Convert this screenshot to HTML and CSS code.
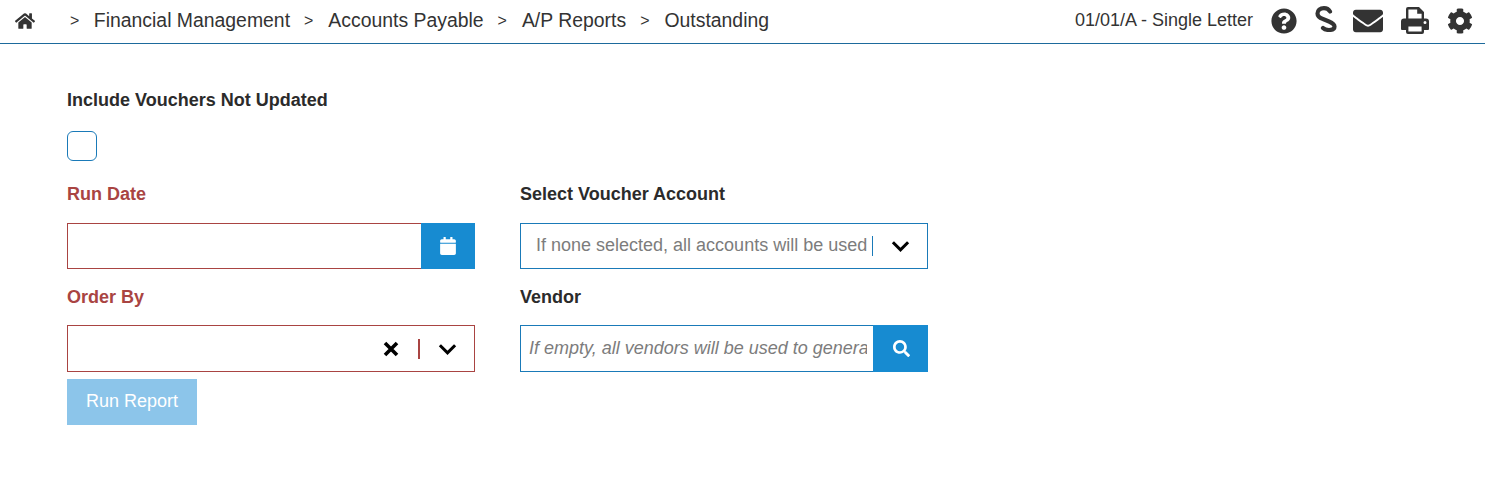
FILE: index.html
```html
<!DOCTYPE html>
<html lang="en">
<head>
<meta charset="utf-8">
<title>Outstanding</title>
<link rel="stylesheet" href="styles.css">
</head>
<body>
<header class="topbar">
  <nav class="crumbs">
    <svg class="home" viewBox="0 0 576 512"><path d="M280.37 148.26L96 300.11V464a16 16 0 0 0 16 16l112.06-.29a16 16 0 0 0 15.92-16V368a16 16 0 0 1 16-16h64a16 16 0 0 1 16 16v95.64a16 16 0 0 0 16 16.05L464 480a16 16 0 0 0 16-16V300L295.67 148.26a12.19 12.19 0 0 0-15.3 0zM571.6 251.47L488 182.56V44.05a12 12 0 0 0-12-12h-56a12 12 0 0 0-12 12v72.61L318.47 43a48 48 0 0 0-61 0L4.34 251.47a12 12 0 0 0-1.6 16.9l25.5 31A12 12 0 0 0 45.15 301l235.22-193.74a12.19 12.19 0 0 1 15.3 0L530.9 301a12 12 0 0 0 16.9-1.6l25.5-31a12 12 0 0 0-1.7-16.93z"/></svg>
    <span class="sep first">&gt;</span><span class="crumb">Financial Management</span>
    <span class="sep">&gt;</span><span class="crumb">Accounts Payable</span>
    <span class="sep">&gt;</span><span class="crumb">A/P Reports</span>
    <span class="sep">&gt;</span><span class="crumb">Outstanding</span>
  </nav>
  <div class="tools">
    <span class="context">01/01/A - Single Letter</span>
    <svg class="ico help" viewBox="0 0 512 512"><path d="M504 256c0 136.997-111.043 248-248 248S8 392.997 8 256C8 119.083 119.043 8 256 8s248 111.083 248 248zM262.655 90c-54.497 0-89.255 22.957-116.549 63.758-3.536 5.286-2.353 12.415 2.715 16.258l34.699 26.31c5.205 3.947 12.621 3.008 16.665-2.122 17.864-22.658 30.113-35.797 57.303-35.797 20.429 0 45.698 13.148 45.698 32.958 0 14.976-12.363 22.667-32.534 33.976C247.128 238.528 216 254.941 216 296v4c0 6.627 5.373 12 12 12h56c6.627 0 12-5.373 12-12v-1.333c0-28.462 83.186-29.647 83.186-106.667 0-58.002-60.165-102-116.531-102zM256 338c-25.365 0-46 20.635-46 46 0 25.364 20.635 46 46 46s46-20.636 46-46c0-25.365-20.635-46-46-46z"/></svg>
    <svg class="ico ess" viewBox="0 0 22 26"><path d="M15 5.500C13.500 3 11.500 2.200 9 2.200 5 2.200 2.500 4.500 2.500 7.500 2.500 10.500 5 12 8 13L14 15.500C17 16.800 19.500 18 19.500 20.500 19.500 23 17 24 14 24 11.500 24 9.500 23.500 8 22" fill="none" stroke="#333" stroke-width="4.200" stroke-linecap="round"/></svg>
    <svg class="ico mail" viewBox="0 0 512 512"><path d="M502.3 190.8c3.9-3.1 9.7-.2 9.7 4.7V400c0 26.5-21.5 48-48 48H48c-26.5 0-48-21.5-48-48V195.6c0-5 5.7-7.8 9.7-4.7 22.4 17.4 52.1 39.5 154.1 113.6 21.1 15.4 56.7 47.8 92.2 47.6 35.7.3 72-32.8 92.3-47.6 102-74.1 131.6-96.3 154-113.7zM256 320c23.2.4 56.6-29.2 73.4-41.4 132.7-96.3 142.8-104.7 173.4-128.7 5.8-4.5 9.2-11.5 9.2-18.9v-19c0-26.5-21.5-48-48-48H48C21.5 64 0 85.5 0 112v19c0 7.4 3.4 14.3 9.2 18.9 30.6 23.9 40.7 32.4 173.4 128.7 16.8 12.2 50.2 41.8 73.4 41.4z"/></svg>
    <svg class="ico print" viewBox="0 0 28 27">
      <path d="M5 12V2a2 2 0 0 1 2-2h11l5 5v7h-2.400V6.800H16.200V2.400H7.400V12z"/>
      <path fill-rule="evenodd" d="M3 11.500h22a3 3 0 0 1 3 3V22a1 1 0 0 1-1 1h-4v2a2 2 0 0 1-2 2H7a2 2 0 0 1-2-2v-2H1a1 1 0 0 1-1-1v-7.500a3 3 0 0 1 3-3zM7.400 19.500v5.100h13.200v-5.100zM24 14a1.500 1.500 0 1 0 0 3 1.500 1.500 0 0 0 0-3z"/>
    </svg>
    <svg class="ico gear" viewBox="0 0 512 512"><path d="M487.4 315.7l-42.6-24.6c4.3-23.2 4.3-47 0-70.2l42.6-24.6c4.9-2.8 7.1-8.6 5.5-14-11.1-35.6-30-67.8-54.7-94.6-3.8-4.1-10-5.1-14.800-2.300L380.800 110c-17.900-15.400-38.500-27.300-60.800-35.100V25.800c0-5.600-3.900-10.500-9.400-11.700-36.700-8.200-74.300-7.800-109.200 0-5.500 1.200-9.400 6.100-9.400 11.700V75c-22.200 7.900-42.800 19.800-60.800 35.100L88.700 85.500c-4.900-2.800-11-1.900-14.800 2.300-24.700 26.700-43.600 58.900-54.700 94.600-1.700 5.400.6 11.200 5.500 14L67.300 221c-4.300 23.200-4.300 47 0 70.200l-42.600 24.600c-4.900 2.800-7.100 8.600-5.500 14 11.100 35.600 30 67.800 54.700 94.600 3.800 4.100 10 5.100 14.800 2.300l42.600-24.600c17.900 15.400 38.500 27.300 60.800 35.100v49.200c0 5.600 3.900 10.500 9.400 11.700 36.700 8.200 74.300 7.800 109.200 0 5.500-1.200 9.400-6.100 9.400-11.700v-49.200c22.200-7.900 42.800-19.800 60.800-35.100l42.600 24.600c4.900 2.800 11 1.900 14.800-2.300 24.700-26.700 43.600-58.900 54.700-94.600 1.500-5.500-.7-11.300-5.600-14.100zM256 336c-44.100 0-80-35.900-80-80s35.900-80 80-80 80 35.900 80 80-35.900 80-80 80z"/></svg>
  </div>
</header>
<main class="form">
  <div class="field-check">
    <label class="label" for="nu">Include Vouchers Not Updated</label>
    <input id="nu" class="check" type="checkbox">
  </div>
  <div class="grid">
    <div class="field">
      <label class="label req">Run Date</label>
      <div class="box req-box">
        <input class="text" type="text">
        <button class="addon" type="button" aria-label="Calendar"><svg class="cal" viewBox="0 0 448 512"><path d="M12 192h424c6.600 0 12 5.400 12 12v260c0 26.500-21.500 48-48 48H48c-26.500 0-48-21.500-48-48V204c0-6.600 5.400-12 12-12zm436-44v-36c0-26.500-21.500-48-48-48h-48V12c0-6.600-5.400-12-12-12h-40c-6.600 0-12 5.400-12 12v52H160V12c0-6.600-5.400-12-12-12h-40c-6.600 0-12 5.400-12 12v52H48C21.500 64 0 85.500 0 112v36c0 6.600 5.400 12 12 12h424c6.600 0 12-5.400 12-12z"/></svg></button>
      </div>
    </div>
    <div class="field">
      <label class="label">Select Voucher Account</label>
      <div class="box select">
        <input class="text account" type="text" placeholder="If none selected, all accounts will be used">
        <span class="bar"></span>
        <svg class="chev large" viewBox="0 0 20 12"><path d="M2 2l8 8 8-8" fill="none" stroke="#000" stroke-width="3.200"/></svg>
      </div>
    </div>
    <div class="field">
      <label class="label req">Order By</label>
      <div class="box tall req-box select">
        <input class="text" type="text">
        <svg class="clear" viewBox="0 0 16 16"><path d="M2 2l12 12M14 2L2 14" fill="none" stroke="#000" stroke-width="3.600"/></svg>
        <span class="bar red"></span>
        <svg class="chev" viewBox="0 0 20 12"><path d="M2 2l8 8 8-8" fill="none" stroke="#000" stroke-width="3.200"/></svg>
      </div>
    </div>
    <div class="field">
      <label class="label">Vendor</label>
      <div class="box tall">
        <input class="text vendor" type="text" placeholder="If empty, all vendors will be used to generate the report">
        <button class="addon wide" type="button" aria-label="Search"><svg class="find" viewBox="0 0 512 512"><path d="M505 442.700L405.300 343c-4.500-4.500-10.600-7-17-7H372c27.600-35.300 44-79.700 44-128C416 93.100 322.900 0 208 0S0 93.100 0 208s93.100 208 208 208c48.300 0 92.700-16.400 128-44v16.300c0 6.400 2.500 12.500 7 17l99.700 99.700c9.400 9.400 24.600 9.400 33.900 0l28.300-28.300c9.400-9.400 9.400-24.600.1-34zM208 336c-70.700 0-128-57.200-128-128 0-70.700 57.200-128 128-128 70.700 0 128 57.200 128 128 0 70.700-57.200 128-128 128z"/></svg></button>
      </div>
    </div>
  </div>
  <button class="run" type="button" disabled>Run Report</button>
</main>
</body>
</html>
```
FILE: styles.css
```css
* { box-sizing: border-box; }
html, body { margin: 0; padding: 0; }
body {
  font-family: "Liberation Sans", Arial, sans-serif;
  color: #333;
  background: #fff;
  height: 478px;
  overflow: hidden;
}
.topbar {
  display: flex;
  justify-content: space-between;
  align-items: center;
  height: 44px;
  padding: 0 12px 2px 15px;
  border-bottom: 1px solid #1d6a9c;
}
.crumbs { display: flex; align-items: center; font-size: 19.400px; }
.home { width: 20px; height: 18px; fill: #333; }
.sep { font-size: 16px; margin: 0 15px 0 14px; }
.sep.first { margin-left: 35px; margin-right: 14.500px; }
.tools { display: flex; align-items: center; }
.context { font-size: 18px; margin-right: 18px; }
.ico { fill: #333; display: block; }
.help { width: 26px; height: 26px; margin-right: 18px; }
.ess { width: 22px; height: 26px; margin-right: 16px; margin-top: -4px; }
.mail { width: 30px; height: 30px; margin-right: 18px; }
.print { width: 28px; height: 27px; margin-right: 18px; }
.gear { width: 26px; height: 26px; }

.form { padding: 46px 0 0 67px; }
.label { display: block; font-size: 18px; font-weight: 700; line-height: 20px; color: #2b2b2b; }
.label.req { color: #a94442; }
.field-check .label { margin-bottom: 21px; }
.check {
  display: block;
  appearance: none;
  width: 30px;
  height: 30px;
  margin: 0 0 23px;
  border: 1px solid #1a7ab8;
  border-radius: 6px;
  background: #fff;
}
.grid {
  display: grid;
  grid-template-columns: 408px 408px;
  column-gap: 45px;
}
.field .label { margin-bottom: 19px; }
.field { padding-bottom: 18px; }
.box {
  display: flex;
  align-items: center;
  height: 46px;
  border: 1px solid #1a7ab8;
  background: #fff;
}
.box.tall { height: 47px; }
.box.req-box { border-color: #a94442; }
.field:nth-child(n+3) { padding-bottom: 7px; }
.field:nth-child(n+3) .label { margin-bottom: 18px; }
.text {
  flex: 1;
  min-width: 0;
  height: 100%;
  border: 0;
  outline: 0;
  padding: 0 8px 2px;
  background: transparent;
  font: 18px "Liberation Sans", Arial, sans-serif;
  color: #333;
}
.text::placeholder { color: #7c7c7c; opacity: 1; }
.account { padding: 0 4px 2px 15px; }
.vendor { font-style: italic; padding: 0 6px 0 8px; }
.addon {
  flex: none;
  display: flex;
  align-items: center;
  justify-content: center;
  width: 54px;
  height: 46px;
  margin: -1px -1px -1px 0;
  padding: 0;
  border: 0;
  background: #178bd1;
}
.addon.wide { width: 55px; height: 47px; padding-left: 1px; }
.cal { width: 16px; height: 18px; fill: #fff; }
.find { width: 17px; height: 17px; fill: #fff; }
.bar { flex: none; width: 1px; height: 20px; background: #1a7ab8; }
.bar.red { background: #a94442; width: 2px; }
.chev { flex: none; width: 19px; height: 12px; margin: 0 17px 0 18px; }
.chev.large { margin: 0 17px 0 18px; }
.clear { flex: none; width: 16px; height: 16px; margin-right: 19px; }
.run {
  display: block;
  width: 130px;
  height: 46px;
  border: 0;
  padding: 0 0 2px;
  background: #8cc5ea;
  color: #fff;
  font: 18px "Liberation Sans", Arial, sans-serif;
}
```
